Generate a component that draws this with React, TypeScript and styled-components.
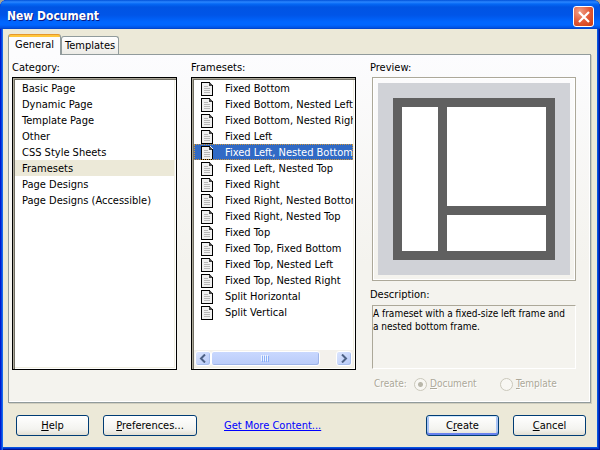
import React, { useState } from 'react';
import styled, { createGlobalStyle, css } from 'styled-components';

const GlobalStyle = createGlobalStyle`
  *, *::before, *::after { box-sizing: border-box; }
  body {
    margin: 0;
    background: #a5a594;
    font: 11px/14px "DejaVu Sans Condensed", "DejaVu Sans", Tahoma, sans-serif;
    color: #000;
  }
  button, input { font: inherit; color: inherit; margin: 0; }
`;

const Window = styled.main`
  min-height: 100vh;
  display: flex;
  flex-direction: column;
  padding: 0 3px 3px;
  border-radius: 7px 7px 0 0;
  background: #0855dd;
  box-shadow: inset 1px 0 #0019cf, inset 2px 0 #0842dd, inset 3px 0 #166aee,
    inset -1px -1px #001590, inset -2px -2px #0033cc;
  overflow: hidden;
`;

const TitleBar = styled.header`
  height: 29px;
  margin: 0 -3px;
  padding: 2px 6px 0 7px;
  display: flex;
  align-items: center;
  justify-content: space-between;
  background: linear-gradient(#0050d8 0, #2a86ff 2px, #0468f4 4px, #0054e3 7px, #0055e8 15px, #0066ff 22px, #0066ff 25px, #0050e0 28px, #003dbf 29px);
`;

const Title = styled.h1`
  margin: 0;
  font-size: 12px;
  line-height: 16px;
  font-weight: bold;
  color: #fff;
  text-shadow: 1px 1px #0a1883;
`;

const CloseButton = styled.button`
  width: 21px;
  height: 21px;
  margin-top: 2px;
  padding: 0;
  display: grid;
  place-items: center;
  border: 1px solid #fff;
  border-radius: 3px;
  background: radial-gradient(circle at 30% 25%, #f0a088, #e35a38 50%, #c93a10);
`;

const Body = styled.div`
  flex: 1;
  display: flex;
  flex-direction: column;
  background: #ece9d8;
`;

const Tabs = styled.div`
  display: flex;
  align-items: flex-end;
  height: 25px;
  padding-left: 5px;
`;

const Tab = styled.button<{ $active?: boolean }>`
  height: 18px;
  padding: 0 3px;
  border: 1px solid #919b9c;
  border-bottom: 0;
  border-radius: 3px 3px 0 0;
  background: linear-gradient(#fff, #ecebe6);
  ${({ $active }) =>
    $active &&
    css`
      position: relative;
      height: 21px;
      margin-bottom: -1px;
      padding: 0 6px 1px;
      border-top: 1px solid #e5972d;
      background: linear-gradient(#ffc73c 2px, #fcfcfe 2px);
    `}
`;

const Panel = styled.section`
  flex: 1;
  margin: 0 6px 0 5px;
  padding: 6px 14px 10px 3px;
  display: grid;
  grid-template-columns: 165fr 165fr 206fr;
  column-gap: 14px;
  border: 1px solid #919b9c;
  box-shadow: 1px 1px #d0cebf, inset -1px -1px #fff;
  background: linear-gradient(#fcfcfe, #f4f3ee 60%);
`;

const Column = styled.div`
  min-width: 0;
  display: flex;
  flex-direction: column;
`;

const ListColumn = styled(Column)`
  padding-bottom: 22px;
`;

const Heading = styled.h2`
  margin: 0 0 2px;
  font-size: 11px;
  line-height: 14px;
  font-weight: normal;
`;

const ListFrame = styled.div`
  flex: 1;
  display: flex;
  flex-direction: column;
  border: 1px solid #000;
  padding: 2px;
  background: #fff;
  box-shadow: inset 1px 1px #aca899, inset 2px 2px #716f64, inset -1px -1px #fff, inset -2px -2px #f1efe2;
`;

const List = styled.ul`
  flex: 1;
  margin: 0;
  padding: 0;
  list-style: none;
  overflow: hidden;
`;

const Item = styled.li<{ $tone?: 'muted' | 'focus' }>`
  height: 16px;
  padding-left: 7px;
  display: flex;
  align-items: center;
  gap: 12px;
  line-height: 18px;
  white-space: nowrap;
  cursor: default;
  ${({ $tone }) => $tone === 'muted' && css`background: #ece9d8;`}
  ${({ $tone }) =>
    $tone === 'focus' &&
    css`
      background: #316ac5;
      color: #fff;
      outline: 1px dotted #ce953a;
      outline-offset: -1px;
    `}
`;

const ItemText = styled.span`
  padding-top: 1px;
`;

const PageSvg = styled.svg`
  flex: none;
  align-self: flex-end;
`;

const ScrollBar = styled.div`
  height: 17px;
  padding: 1px;
  display: flex;
  background: #f3f1ec;
`;

const ScrollButton = styled.button`
  width: 16px;
  padding: 0;
  display: grid;
  place-items: center;
  border: 1px solid #fff;
  border-radius: 3px;
  background: linear-gradient(135deg, #dbe5fe, #b6c9f7);
  box-shadow: inset -1px -1px #a9bfee;
`;

const Track = styled.div`
  flex: 1;
  display: flex;
`;

const Thumb = styled.div`
  width: 87%;
  display: grid;
  place-items: center;
  border: 1px solid #fff;
  border-radius: 3px;
  background: linear-gradient(#c9d8fe, #b9cbf9);
  box-shadow: inset -1px -1px #9fb5e8;
`;

const Side = styled(Column)`
  padding-left: 2px;

  ${Heading} { margin-left: -2px; }
`;

const Preview = styled.div`
  aspect-ratio: 1;
  margin-bottom: 7px;
  padding: 5px;
  border: 1px solid #aca899;
  outline: 1px solid #fff;
  outline-offset: -2px;

  svg { display: block; width: 100%; height: 100%; }
`;

const Description = styled.p`
  flex: 1;
  min-height: 64px;
  margin: 1px 0 0;
  padding: 1px 8px 0 0;
  border: 1px solid;
  border-color: #aca899 #fff #fff #aca899;
  font-size: 10px;
  line-height: 13px;
`;

const CreateRow = styled.fieldset`
  min-width: 0;
  margin: 7px 0 0;
  padding: 0 0 0 2px;
  border: 0;
  display: grid;
  grid-template-columns: 40px 86px auto;
  align-items: center;
  font-size: 10px;
  line-height: 16px;
  color: #aca899;
  text-shadow: 1px 1px #fff;
`;

const RadioLabel = styled.label`
  display: flex;
  align-items: center;
  gap: 3px;
`;

const Radio = styled.input`
  appearance: none;
  width: 13px;
  height: 13px;
  border: 1px solid #cac8bb;
  border-radius: 50%;
  background: #f8f7f3;

  &:checked { background: radial-gradient(circle, #b9b7aa 2px, #f8f7f3 3px); }
`;

const Footer = styled.footer`
  padding: 12px 11px 11px 13px;
  display: flex;
  align-items: center;
  gap: 14px;
`;

const PushButton = styled.button<{ $wide?: boolean; $primary?: boolean }>`
  width: ${({ $wide }) => ($wide ? 94 : 73)}px;
  height: 21px;
  padding: 0;
  border: 1px solid #003c74;
  border-radius: 3px;
  background: linear-gradient(#fff, #f3f3ef 70%, #e2dfd3);
  ${({ $primary }) =>
    $primary && css`box-shadow: inset 0 1px #cee7ff, inset 0 -2px #6982ee, inset 2px 0 #a9c4f5, inset -2px 0 #a9c4f5;`}
`;

const MoreLink = styled.a`
  margin: 0 auto 0 13px;
  color: #00f;
  text-decoration: underline;
`;

const PageIcon = () => (
  <PageSvg width="12" height="14" viewBox="0 0 12 14" shapeRendering="crispEdges" aria-hidden="true">
    <path d="M0 0h9l3 3v11H0z" fill="#f0f0f0" />
    <path d="M0 0h9v1H1v12h10V3h1v11H0z" fill="#000" />
    <path d="M8 1h1v1h1v1h1v1H8zM9 1h1v1H9zM10 2h1v1h-1z" fill="#444" />
    <path d="M3 4h4v1H3zM3 6h6v1H3zM3 8h6v1H3zM3 10h6v1H3z" fill="#b8b8b8" />
  </PageSvg>
);

const Arrow = ({ d }: { d: string }) => (
  <svg width="8" height="9" viewBox="0 0 8 9" fill="none" stroke="#4d6185" strokeWidth="2" aria-hidden="true">
    <path d={d} />
  </svg>
);

const FramePicture = () => (
  <svg viewBox="0 0 192 192" shapeRendering="crispEdges" role="img" aria-label="Frameset layout">
    <rect width="192" height="192" fill="#d0d2d7" />
    <rect x="15" y="15" width="162" height="162" fill="#606060" />
    <rect x="24" y="24" width="36" height="144" fill="#fff" />
    <rect x="69" y="24" width="99" height="99" fill="#fff" />
    <rect x="69" y="132" width="99" height="36" fill="#fff" />
  </svg>
);

const categories = [
  'Basic Page', 'Dynamic Page', 'Template Page', 'Other', 'CSS Style Sheets',
  'Framesets', 'Page Designs', 'Page Designs (Accessible)',
];

const framesets = [
  'Fixed Bottom', 'Fixed Bottom, Nested Left', 'Fixed Bottom, Nested Right', 'Fixed Left',
  'Fixed Left, Nested Bottom', 'Fixed Left, Nested Top', 'Fixed Right', 'Fixed Right, Nested Bottom',
  'Fixed Right, Nested Top', 'Fixed Top', 'Fixed Top, Fixed Bottom', 'Fixed Top, Nested Left',
  'Fixed Top, Nested Right', 'Split Horizontal', 'Split Vertical',
];

export default function App() {
  const [category, setCategory] = useState('Framesets');
  const [frameset, setFrameset] = useState('Fixed Left, Nested Bottom');

  return (
    <>
      <GlobalStyle />
      <Window>
        <TitleBar>
          <Title>New Document</Title>
          <CloseButton type="button" aria-label="Close">
            <svg width="12" height="12" viewBox="0 0 12 12" stroke="#fff" strokeWidth="2.2" aria-hidden="true">
              <path d="M1 1l10 10M11 1L1 11" />
            </svg>
          </CloseButton>
        </TitleBar>
        <Body>
          <Tabs role="tablist">
            <Tab type="button" role="tab" aria-selected="true" $active>General</Tab>
            <Tab type="button" role="tab" aria-selected="false">Templates</Tab>
          </Tabs>
          <Panel>
            <ListColumn>
              <Heading id="category">Category:</Heading>
              <ListFrame>
                <List role="listbox" aria-labelledby="category">
                  {categories.map((name) => (
                    <Item
                      key={name}
                      role="option"
                      aria-selected={name === category}
                      $tone={name === category ? 'muted' : undefined}
                      onClick={() => setCategory(name)}
                    >
                      <ItemText>{name}</ItemText>
                    </Item>
                  ))}
                </List>
              </ListFrame>
            </ListColumn>
            <ListColumn>
              <Heading id="framesets">Framesets:</Heading>
              <ListFrame>
                <List role="listbox" aria-labelledby="framesets">
                  {framesets.map((name) => (
                    <Item
                      key={name}
                      role="option"
                      aria-selected={name === frameset}
                      $tone={name === frameset ? 'focus' : undefined}
                      onClick={() => setFrameset(name)}
                    >
                      <PageIcon />
                      <ItemText>{name}</ItemText>
                    </Item>
                  ))}
                </List>
                <ScrollBar>
                  <ScrollButton type="button" aria-label="Scroll left"><Arrow d="M6 .5L2 4.5l4 4" /></ScrollButton>
                  <Track>
                    <Thumb>
                      <svg width="8" height="7" viewBox="0 0 8 7" shapeRendering="crispEdges" aria-hidden="true">
                        <path d="M0 0h1v6H0zM2 0h1v6H2zM4 0h1v6H4zM6 0h1v6H6z" fill="#eef4fe" />
                        <path d="M1 1h1v6H1zM3 1h1v6H3zM5 1h1v6H5zM7 1h1v6H7z" fill="#8cb0f8" />
                      </svg>
                    </Thumb>
                  </Track>
                  <ScrollButton type="button" aria-label="Scroll right"><Arrow d="M2 .5l4 4-4 4" /></ScrollButton>
                </ScrollBar>
              </ListFrame>
            </ListColumn>
            <Side>
              <Heading>Preview:</Heading>
              <Preview><FramePicture /></Preview>
              <Heading>Description:</Heading>
              <Description>A frameset with a fixed-size left frame and a nested bottom frame.</Description>
              <CreateRow disabled aria-label="Create">
                <span>Create:</span>
                <RadioLabel>
                  <Radio type="radio" name="create" defaultChecked />
                  <span><u>D</u>ocument</span>
                </RadioLabel>
                <RadioLabel>
                  <Radio type="radio" name="create" />
                  <span><u>T</u>emplate</span>
                </RadioLabel>
              </CreateRow>
            </Side>
          </Panel>
          <Footer>
            <PushButton type="button"><u>H</u>elp</PushButton>
            <PushButton type="button" $wide><u>P</u>references...</PushButton>
            <MoreLink href="#content">Get More Content...</MoreLink>
            <PushButton type="button" $primary>C<u>r</u>eate</PushButton>
            <PushButton type="button"><u>C</u>ancel</PushButton>
          </Footer>
        </Body>
      </Window>
    </>
  );
}
